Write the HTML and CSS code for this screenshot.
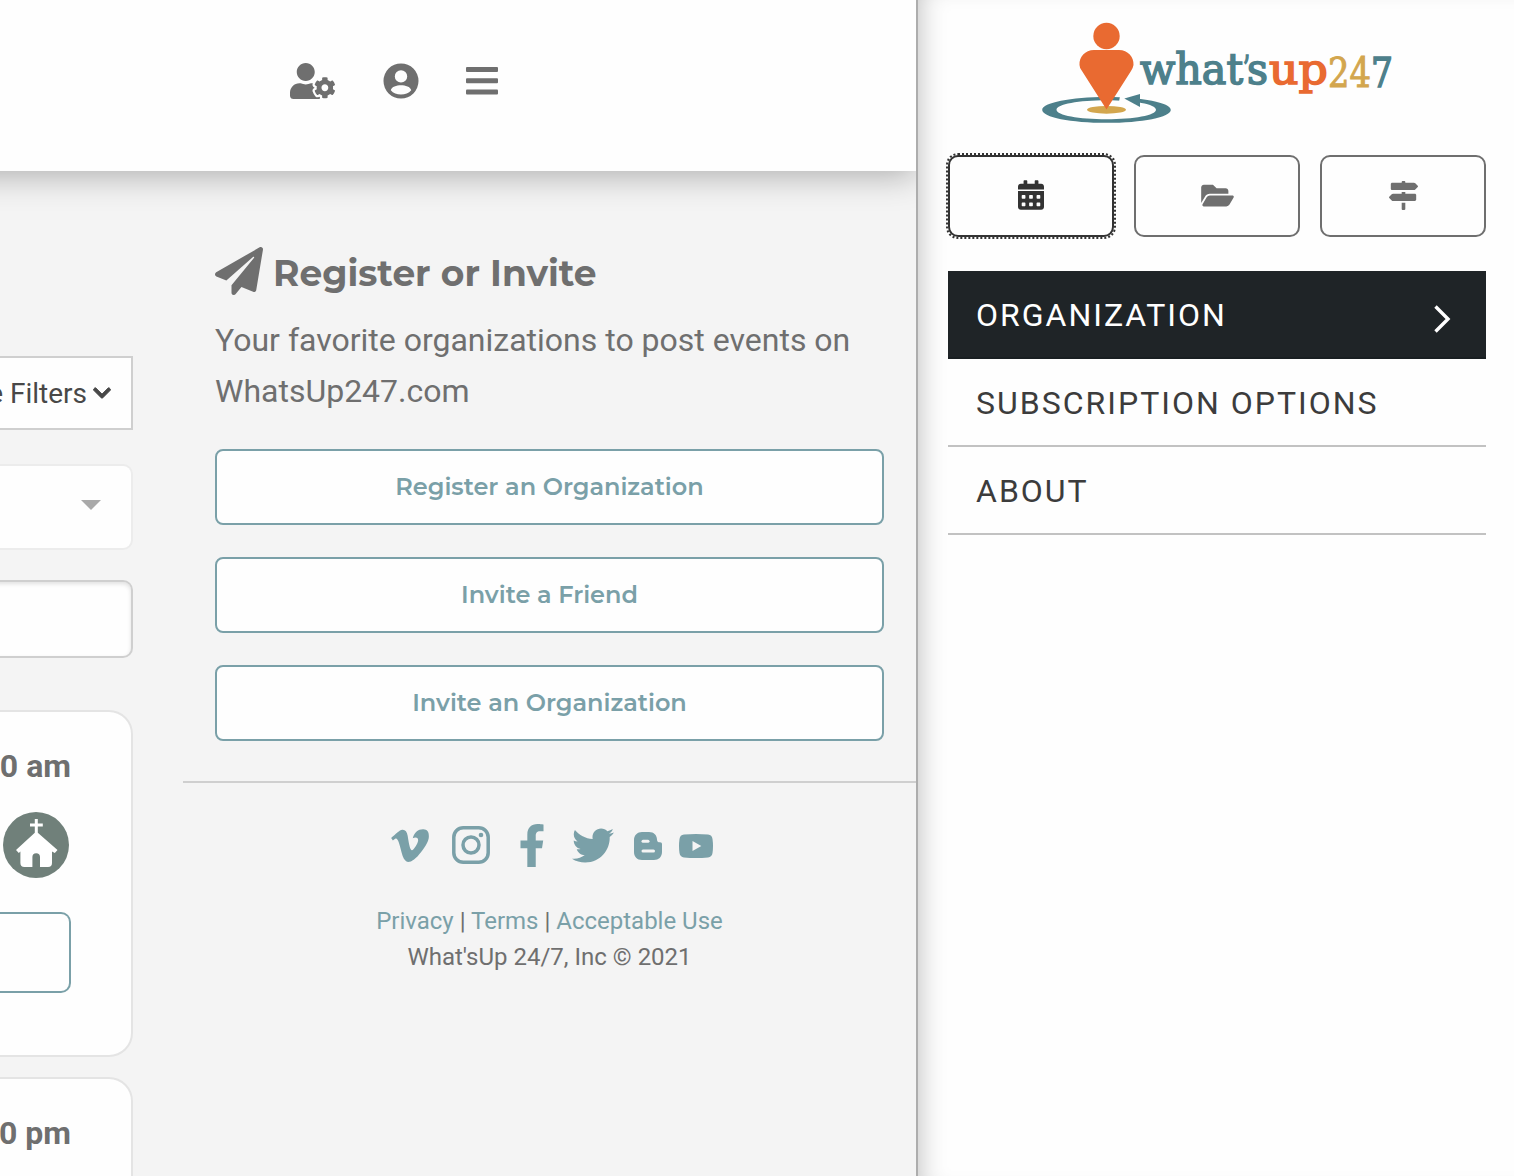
FILE: index.html
```html
<!DOCTYPE html>
<html lang="en">
<head>
<meta charset="utf-8">
<title>What'sUp 24/7</title>
<link rel="stylesheet" href="styles.css">
</head>
<body>
<div class="page">
  <header class="header">
    <svg class="icon-admin" viewBox="0 0 640 512"><path d="M610.5 373.3c2.6-14.1 2.6-28.5 0-42.6l25.8-14.9c3-1.7 4.3-5.2 3.3-8.5-6.7-21.6-18.2-41.2-33.2-57.4-2.3-2.5-6-3.1-9-1.4l-25.8 14.9c-10.9-9.3-23.4-16.5-36.9-21.3v-29.8c0-3.4-2.4-6.4-5.7-7.1-22.3-5-45-4.8-66.2 0-3.3.7-5.7 3.7-5.7 7.1v29.8c-13.5 4.8-26 12-36.9 21.3l-25.8-14.9c-2.9-1.7-6.7-1.1-9 1.4-15 16.2-26.5 35.8-33.2 57.4-1 3.3.4 6.8 3.3 8.5l25.8 14.9c-2.6 14.1-2.6 28.5 0 42.6l-25.8 14.9c-3 1.7-4.3 5.2-3.3 8.5 6.7 21.6 18.2 41.1 33.2 57.4 2.3 2.5 6 3.1 9 1.4l25.8-14.9c10.9 9.3 23.4 16.5 36.9 21.3v29.8c0 3.4 2.4 6.4 5.7 7.1 22.3 5 45 4.8 66.2 0 3.3-.7 5.7-3.7 5.7-7.1v-29.8c13.5-4.8 26-12 36.9-21.3l25.8 14.9c2.9 1.7 6.7 1.1 9-1.4 15-16.2 26.5-35.8 33.2-57.4 1-3.3-.4-6.8-3.3-8.5l-25.8-14.9zM496 400.5c-26.8 0-48.5-21.8-48.5-48.5s21.8-48.5 48.5-48.5 48.5 21.8 48.5 48.5-21.7 48.5-48.5 48.5zM224 256c70.7 0 128-57.3 128-128S294.7 0 224 0 96 57.3 96 128s57.3 128 128 128zm201.2 226.5c-2.3-1.2-4.6-2.6-6.8-3.9l-7.9 4.6c-6 3.4-12.8 5.3-19.6 5.3-10.9 0-21.4-4.6-28.9-12.6-18.3-19.8-32.3-43.9-40.2-69.6-5.5-17.7 1.9-36.4 17.9-45.7l7.9-4.6c-.1-2.6-.1-5.2 0-7.8l-7.9-4.6c-16-9.2-23.4-28-17.9-45.7.9-2.9 2.2-5.8 3.2-8.7-3.8-.3-7.5-1.2-11.4-1.2h-16.7c-22.2 10.2-46.9 16-72.9 16s-50.6-5.8-72.9-16h-16.7C60.2 288 0 348.2 0 422.4V464c0 26.5 21.5 48 48 48h352c10.1 0 19.5-3.2 27.2-8.5-1.2-3.8-2-7.7-2-11.8v-9.2z"/></svg>
    <svg class="icon-account" viewBox="0 0 36 36"><path fill-rule="evenodd" d="M18 .5a17.5 17.5 0 1 0 0 35a17.5 17.5 0 1 0 0-35zM18 7.2a6.2 6.2 0 1 1 0 12.4a6.2 6.2 0 1 1 0-12.4zM7.8 27.2C8.600 23.800 13.500 22.300 18 22.300S27.400 23.800 28.200 27.200C25.800 30.100 22.200 31.600 18 31.600S10.200 30.100 7.800 27.200z"/></svg>
    <svg class="icon-menu" viewBox="0 0 32 28"><rect y="0" width="32" height="5" rx="1"/><rect y="11.300" width="32" height="5" rx="1"/><rect y="22.600" width="32" height="5" rx="1"/></svg>
  </header>
  <div class="content">
    <section class="events">
      <div class="filters"><span>e Filters</span><svg viewBox="0 0 448 512"><path d="M207.029 381.476L12.686 187.132c-9.373-9.373-9.373-24.569 0-33.941l22.667-22.667c9.357-9.357 24.522-9.375 33.901-.04L224 284.505l154.745-154.021c9.379-9.335 24.544-9.317 33.901.04l22.667 22.667c9.373 9.373 9.373 24.569 0 33.941L240.971 381.476c-9.373 9.372-24.569 9.372-33.942 0z"/></svg></div>
      <div class="select"><svg viewBox="0 0 20 10"><path d="M0 0h20L10 10z"/></svg></div>
      <div class="input"></div>
      <article class="card">
        <div class="time">0 am</div>
        <svg class="church" viewBox="0 0 66 66"><circle cx="33" cy="33" r="33" fill="#70807a"/><path fill="#fff" d="M31.800 7h3v4.400h5v3h-5v6.400L54.500 38l-2.700 3-2.800-1.600V51q0 4-4 4h-8V45a3.800 3.800 0 0 0-7.600 0v10h-8q-4 0-4-4V39.400L15.800 41l-2.800-3 18.800-17.200v-6.400h-4.800v-3h4.800z"/></svg>
        <div class="card-button"></div>
      </article>
      <article class="card"><div class="time">0 pm</div></article>
    </section>
    <aside class="invite">
      <div class="invite-body">
        <h2><svg viewBox="0 0 512 512"><path d="M476 3.2L12.500 270.600c-18.100 10.400-15.800 35.600 2.200 43.200L121 358.400l287.300-253.200c5.500-4.900 13.300 2.600 8.600 8.300L176 407v80.500c0 23.600 28.500 32.900 42.500 15.800L282 426l124.600 52.200c14.200 6 30.400-2.900 33-18.200l72-432C515 7.800 493.300-6.800 476 3.200z"/></svg><span>Register or Invite</span></h2>
        <p>Your favorite organizations to post events on WhatsUp247.com</p>
        <a class="button">Register an Organization</a>
        <a class="button">Invite a Friend</a>
        <a class="button">Invite an Organization</a>
      </div>
      <footer>
        <div class="social">
          <svg class="vimeo" viewBox="0 60 448 392"><path d="M447.800 153.600c-2 43.600-32.400 103.300-91.400 179.100-60.900 79.200-112.400 118.800-154.600 118.800-26.100 0-48.200-24.100-66.300-72.300C100.300 250 85.300 174.300 56.200 174.300c-3.400 0-15.100 7.100-35.200 21.100L0 168.200c51.600-45.300 100.900-95.700 131.800-98.500 34.900-3.400 56.300 20.500 64.400 71.500 28.700 181.500 41.400 208.900 93.600 126.700 18.700-29.600 28.800-52.100 30.200-67.600 4.800-45.900-35.800-42.800-63.300-31 22-72.100 64.100-107.100 126.200-105.100 45.800 1.200 67.500 31.100 64.900 89.400z"/></svg>
          <svg class="instagram" viewBox="0 0 38 38"><rect x="1.800" y="1.800" width="34.400" height="34.400" rx="9.500" fill="none" stroke="#7aa0a8" stroke-width="3.500"/><circle cx="19" cy="19" r="8" fill="none" stroke="#7aa0a8" stroke-width="3.500"/><circle cx="29" cy="9" r="2.300"/></svg>
          <svg class="facebook" viewBox="22 0 276 512"><path d="M279.140 288l14.220-92.660h-88.910v-60.130c0-25.350 12.420-50.060 52.240-50.060h40.420V6.260S260.430 0 225.360 0c-73.220 0-121.080 44.380-121.080 124.720v70.620H22.890V288h81.390v224h100.170V288z"/></svg>
          <svg class="twitter" viewBox="0 48 512 416"><path d="M459.370 151.716c.325 4.548.325 9.097.325 13.645 0 138.720-105.583 298.558-298.558 298.558-59.452 0-114.680-17.219-161.137-47.106 8.447.974 16.568 1.299 25.340 1.299 49.055 0 94.213-16.568 130.274-44.832-46.132-.975-84.792-31.188-98.112-72.772 6.498.974 12.995 1.624 19.818 1.624 9.421 0 18.843-1.300 27.614-3.573-48.081-9.747-84.143-51.980-84.143-102.985v-1.299c13.969 7.797 30.214 12.670 47.431 13.319-28.264-18.843-46.781-51.005-46.781-87.391 0-19.492 5.197-37.360 14.294-52.954 51.655 63.675 129.300 105.258 216.365 109.807-1.624-7.797-2.599-15.918-2.599-24.040 0-57.828 46.782-104.934 104.934-104.934 30.213 0 57.502 12.670 76.670 33.137 23.715-4.548 46.456-13.320 66.599-25.340-7.798 24.366-24.366 44.833-46.132 57.827 21.117-2.273 41.584-8.122 60.426-16.243-14.292 20.791-32.161 39.308-52.628 54.253z"/></svg>
          <svg class="blogger" viewBox="0 0 28 28"><path d="M8 0h7c5 0 8 3.500 8 7.500C23 9.500 24 10.300 26 10.300c1.500 0 2 .7 2 2V20c0 5-3.500 8-8 8H8c-5 0-8-3.500-8-8V8c0-5 3.500-8 8-8z"/><rect x="7.500" y="7.700" width="8" height="3" rx="1.500" fill="#f4f4f4"/><rect x="7.500" y="17.600" width="13.500" height="3" rx="1.500" fill="#f4f4f4"/></svg>
          <svg class="youtube" viewBox="0 0 34 24"><path d="M5 .6Q17-.6 29 .6Q33 1 33.500 5Q34.500 12 33.500 19Q33 23 29 23.400Q17 24.600 5 23.400Q1 23 .5 19Q-.5 12 .5 5Q1 1 5 .6z"/><path fill="#f4f4f4" d="M13.500 7v10l8.800-5z"/></svg>
        </div>
        <div class="legal"><a>Privacy</a> | <a>Terms</a> | <a>Acceptable Use</a></div>
        <div class="legal">What'sUp 24/7, Inc © 2021</div>
      </footer>
    </aside>
  </div>
</div>
<nav class="sidebar">
  <svg class="logo" viewBox="0 0 354 104">
    <path fill="#4d808b" fill-rule="evenodd" d="M64.500 75C100 75 128.800 80.700 128.800 87.900S100 100.800 64.500 100.800S.2 95.100 .2 87.900S29 75 64.500 75zM64.500 78.300C37 78.300 14.500 82.300 14.500 87.800S37 97.300 64.500 97.300S114 93.300 114 87.800S92 78.300 64.500 78.300z"/>
    <path fill="#fefefe" d="M78.500 72H97v10H76.500z"/>
    <path fill="#4d808b" d="M82.300 76.600L98 72v13z"/>
    <ellipse cx="64.500" cy="87.800" rx="19.500" ry="3.900" fill="#d3a64e"/>
    <circle cx="64.500" cy="14" r="13.200" fill="#e96a31"/>
    <path fill="#e96a31" d="M52 28h25c9 0 15 7 14.500 15q-.5 3-2.500 6L64.500 87.500L40 49q-2.500-3-2.500-6C37 35 43 28 52 28z"/>
    <g class="wordmark" font-size="43">
      <text x="98" y="62" fill="#4d808b" stroke="#4d808b" textLength="103" lengthAdjust="spacingAndGlyphs">what</text>
      <text x="201" y="59" font-size="36" fill="#4d808b" stroke="#4d808b" textLength="7" lengthAdjust="spacingAndGlyphs">’</text>
      <text x="205" y="62" fill="#4d808b" stroke="#4d808b" textLength="21" lengthAdjust="spacingAndGlyphs">s</text>
      <text x="227" y="62" fill="#e96a31" stroke="#e96a31" textLength="59" lengthAdjust="spacingAndGlyphs">up</text>
      <text x="286" y="65" font-size="41" class="thin" fill="#d3a64e" stroke="#d3a64e" textLength="43" lengthAdjust="spacingAndGlyphs">24</text>
      <text x="329" y="65" font-size="41" fill="#4d808b" stroke="#4d808b" textLength="22" lengthAdjust="spacingAndGlyphs">7</text>
    </g>
  </svg>
  <div class="tabs">
    <a class="tab active"><svg class="calendar" viewBox="0 0 448 512"><path d="M400 64h-48V16c0-8.800-7.200-16-16-16h-32c-8.800 0-16 7.200-16 16v48H160V16c0-8.800-7.200-16-16-16h-32c-8.800 0-16 7.200-16 16v48H48C21.500 64 0 85.500 0 112v48h448v-48c0-26.500-21.500-48-48-48z"/><path fill-rule="evenodd" d="M0 464c0 26.500 21.500 48 48 48h352c26.500 0 48-21.500 48-48V186H0zM76 256h40q12 0 12 12v40q0 12-12 12h-40q-12 0-12-12v-40q0-12 12-12zM204 256h40q12 0 12 12v40q0 12-12 12h-40q-12 0-12-12v-40q0-12 12-12zM332 256h40q12 0 12 12v40q0 12-12 12h-40q-12 0-12-12v-40q0-12 12-12zM76 384h40q12 0 12 12v40q0 12-12 12h-40q-12 0-12-12v-40q0-12 12-12zM204 384h40q12 0 12 12v40q0 12-12 12h-40q-12 0-12-12v-40q0-12 12-12zM332 384h40q12 0 12 12v40q0 12-12 12h-40q-12 0-12-12v-40q0-12 12-12z"/></svg></a>
    <a class="tab"><svg class="folder" viewBox="0 0 576 512"><path d="M572.694 292.093L500.270 416.248A63.997 63.997 0 0 1 444.989 448H45.025c-18.523 0-30.064-20.093-20.731-36.093l72.424-124.155A64 64 0 0 1 152 256h399.964c18.523 0 30.064 20.093 20.730 36.093zM152 224h328v-48c0-26.510-21.490-48-48-48H272l-64-64H48C21.490 64 0 85.490 0 112v278.046l69.077-118.418C86.214 242.250 117.989 224 152 224z"/></svg></a>
    <a class="tab"><svg class="signs" viewBox="0 0 512 512"><path d="M507.310 84.690L464 41.370c-6-6-14.140-9.370-22.630-9.370H288V16c0-8.840-7.160-16-16-16h-32c-8.840 0-16 7.160-16 16v16H56c-13.250 0-24 10.750-24 24v80c0 13.250 10.750 24 24 24h385.370c8.490 0 16.620-3.370 22.630-9.370l43.310-43.310c6.250-6.260 6.250-16.380 0-22.630zM224 496c0 8.840 7.160 16 16 16h32c8.840 0 16-7.160 16-16V384h-64v112zm232-272H288v-32h-64v32H70.630c-8.490 0-16.620 3.370-22.630 9.370L4.690 276.690c-6.250 6.250-6.250 16.380 0 22.630L48 342.630c6 6 14.140 9.370 22.630 9.370H456c13.250 0 24-10.750 24-24v-80c0-13.250-10.750-24-24-24z"/></svg></a>
  </div>
  <ul class="menu">
    <li class="current"><span>ORGANIZATION</span><svg viewBox="0 0 18 30"><path d="M2.500 2.500L15 15L2.500 27.500"/></svg></li>
    <li>SUBSCRIPTION OPTIONS</li>
    <li>ABOUT</li>
  </ul>
</nav>
</body>
</html>
```
FILE: styles.css
```css
* { box-sizing: border-box; }
body {
  margin: 0;
  height: 1176px;
  display: flex;
  overflow: hidden;
  font-family: Roboto, "Liberation Sans", sans-serif;
  color: #6f6f6f;
  background: #fefefe;
}
svg { display: block; flex: none; fill: currentColor; }

.page { width: 916px; flex: none; overflow: hidden; background: #f4f4f4; }
.header {
  position: relative;
  height: 171px;
  margin-left: -60px;
  padding: 0 418px 10px 350px;
  display: flex;
  align-items: center;
  background: #fefefe;
  box-shadow: 0 4px 32px rgba(0, 0, 0, .3);
}
.icon-admin { width: 45px; height: 36px; }
.icon-account { width: 36px; height: 36px; margin-left: 47.500px; }
.icon-menu { width: 32px; height: 28px; margin-left: 47.500px; }

.content { display: flex; gap: 50px; height: 1005px; }
.events { width: 133px; padding-top: 185px; overflow: hidden; }
.filters {
  height: 74px;
  padding-right: 20px;
  display: flex;
  align-items: center;
  justify-content: flex-end;
  gap: 6px;
  border: 2px solid #cfcfcf;
  border-left: 0;
  background: #fefefe;
  color: #484848;
  font-size: 28px;
  white-space: nowrap;
}
.filters svg { width: 18px; height: 20px; stroke: currentColor; stroke-width: 24; }
.select {
  height: 86px;
  margin-top: 34px;
  padding-right: 30px;
  display: flex;
  align-items: center;
  justify-content: flex-end;
  border: 2px solid #ececec;
  border-left: 0;
  border-radius: 0 10px 10px 0;
  background: #fefefe;
  color: #a9a9a9;
}
.select svg { width: 20px; height: 10px; margin-bottom: 4px; }
.input {
  height: 78px;
  margin: 30px 0 0 -20px;
  border: 2px solid #cfcfcf;
  border-left: 0;
  border-radius: 0 10px 10px 0;
  background: #fefefe;
  box-shadow: inset 0 2px 4px rgba(0, 0, 0, .12);
}
.card {
  height: 347px;
  margin-top: 20px;
  padding: 34px 60px 0 0;
  display: flex;
  flex-direction: column;
  align-items: flex-end;
  border: 2px solid #e4e4e4;
  border-left: 0;
  border-radius: 0 24px 24px 0;
  background: #fefefe;
}
.input + .card { margin-top: 52px; }
.time { font-size: 32px; font-weight: 700; line-height: 40px; white-space: nowrap; }
.church { width: 66px; height: 66px; margin: 26px 2px 0 0; }
.card-button {
  width: 100%;
  height: 81px;
  margin-top: 34px;
  border: 2px solid #7aa0a8;
  border-left: 0;
  border-radius: 0 10px 10px 0;
}

.invite { flex: 1; }
.invite-body {
  height: 612px;
  padding: 76px 32px 0;
  display: flex;
  flex-direction: column;
  border-bottom: 2px solid #cfcfcf;
}
.invite h2 {
  margin: 0;
  height: 48px;
  display: flex;
  align-items: center;
  gap: 10px;
  font: 700 36px/48px Montserrat, Inter, sans-serif;
  white-space: nowrap;
}
.invite h2 span { padding-top: 4px; }
.invite h2 svg { width: 48px; height: 48px; }
.invite p { margin: 20px 0 0; height: 102px; font-size: 32px; line-height: 51px; }
.button {
  height: 76px;
  margin-top: 32px;
  border: 2px solid #7aa0a8;
  border-radius: 8px;
  background: #fefefe;
  color: #7aa0a8;
  font: 600 24px/71px Montserrat, Inter, sans-serif;
  text-align: center;
}
footer { color: #7aa0a8; }
.social { height: 88px; margin: 18px 0 14px; padding-left: 208px; display: flex; align-items: center; }
.vimeo { width: 38px; height: 33px; }
.instagram { width: 38px; height: 38px; margin-left: 23px; }
.facebook { width: 24px; height: 43px; margin-left: 30px; }
.twitter { width: 42px; height: 35px; margin-left: 28px; }
.blogger { width: 28px; height: 28px; margin: 2px 0 0 20px; }
.youtube { width: 34px; height: 24px; margin: 2px 0 0 17px; }
.legal { color: #6f6f6f; font-size: 24px; line-height: 36px; text-align: center; }
.legal a { color: #7aa0a8; }

.sidebar {
  flex: 1;
  padding: 22px 28px 0 30px;
  border-left: 2px solid #adadad;
  background: #fefefe;
  box-shadow: inset 22px 2px 28px -22px rgba(0, 0, 0, .28);
}
.logo { width: 354px; height: 104px; margin-left: 94px; }
.wordmark { font-family: Rockwell, "DejaVu Serif", serif; stroke-width: 1.6; }
.wordmark .thin { stroke-width: 1; }
.tabs { display: flex; gap: 20px; margin-top: 29px; }
.tab {
  flex: 1;
  height: 82px;
  padding-bottom: 2px;
  display: flex;
  align-items: center;
  justify-content: center;
  border: 2px solid #6f6f6f;
  border-radius: 10px;
  background: #fefefe;
}
.active { border-color: #333; color: #333; outline: 2px dotted #333; }
.calendar { width: 26px; height: 30px; }
.folder { width: 33px; height: 29px; }
.signs { width: 29px; height: 29px; }
.menu { margin: 34px 0 0; padding: 0; list-style: none; }
.menu li {
  height: 88px;
  padding: 2px 28px 0;
  display: flex;
  align-items: center;
  justify-content: space-between;
  border-bottom: 2px solid #c2c2c2;
  background: #fefefe;
  color: #3c3c3c;
  font-size: 32px;
  letter-spacing: 2px;
}
.menu .current { border-color: #191f22; background: #1f2427; color: #fff; }
.menu svg { width: 18px; height: 30px; margin: 8px 7px 0 0; fill: none; stroke: #fff; stroke-width: 3.4; }
```
